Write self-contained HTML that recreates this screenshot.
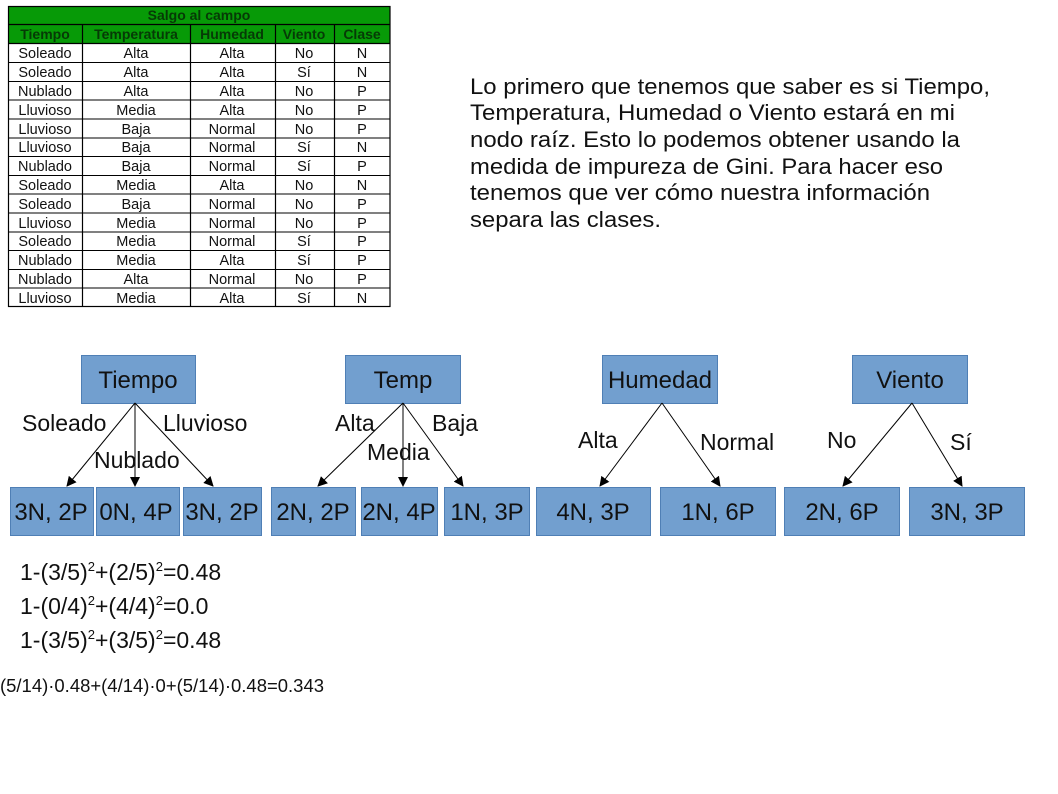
<!DOCTYPE html>
<html><head><meta charset="utf-8"><style>
html,body{margin:0;padding:0;background:#fff;width:1058px;height:794px;overflow:hidden}
svg{display:block;font-family:"Liberation Sans",sans-serif}
</style></head><body>
<svg width="1058" height="794" viewBox="0 0 1058 794" xmlns="http://www.w3.org/2000/svg">
<defs><marker id="a" markerWidth="10" markerHeight="10" refX="9" refY="5" orient="auto" markerUnits="userSpaceOnUse" viewBox="0 0 10 10"><path d="M0,0 L10,5 L0,10 z" fill="#000"/></marker></defs>
<rect x="8" y="6" width="382" height="37" fill="#079a07"/>
<g stroke="#000" stroke-width="1.2" fill="none">
<rect x="8.5" y="6.5" width="381.5" height="300"/>
<line x1="8" y1="24.5" x2="390" y2="24.5"/>
<line x1="8" y1="43.5" x2="390" y2="43.5"/>
<line x1="82.5" y1="25" x2="82.5" y2="306"/>
<line x1="190.5" y1="25" x2="190.5" y2="306"/>
<line x1="275.5" y1="25" x2="275.5" y2="306"/>
<line x1="334.5" y1="25" x2="334.5" y2="306"/>
</g>
<g stroke="#000" stroke-width="1">
<line x1="8" y1="62.5" x2="390" y2="62.5"/><line x1="8" y1="81.5" x2="390" y2="81.5"/><line x1="8" y1="100" x2="390" y2="100"/><line x1="8" y1="119" x2="390" y2="119"/><line x1="8" y1="138" x2="390" y2="138"/><line x1="8" y1="156.5" x2="390" y2="156.5"/><line x1="8" y1="175.5" x2="390" y2="175.5"/><line x1="8" y1="194" x2="390" y2="194"/><line x1="8" y1="213" x2="390" y2="213"/><line x1="8" y1="232" x2="390" y2="232"/><line x1="8" y1="250.5" x2="390" y2="250.5"/><line x1="8" y1="269.5" x2="390" y2="269.5"/><line x1="8" y1="288" x2="390" y2="288"/>
</g>
<g font-size="14" text-anchor="middle" font-weight="bold" fill="#063a06">
<text x="199" y="20">Salgo al campo</text>
<text x="45" y="39">Tiempo</text><text x="136" y="39">Temperatura</text><text x="232" y="39">Humedad</text><text x="304" y="39">Viento</text><text x="362" y="39">Clase</text>
</g>
<g font-size="14.5" text-anchor="middle" fill="#111">
<text y="58"><tspan x="45">Soleado</tspan><tspan x="136">Alta</tspan><tspan x="232">Alta</tspan><tspan x="304">No</tspan><tspan x="362">N</tspan></text>
<text y="77"><tspan x="45">Soleado</tspan><tspan x="136">Alta</tspan><tspan x="232">Alta</tspan><tspan x="304">Sí</tspan><tspan x="362">N</tspan></text>
<text y="96"><tspan x="45">Nublado</tspan><tspan x="136">Alta</tspan><tspan x="232">Alta</tspan><tspan x="304">No</tspan><tspan x="362">P</tspan></text>
<text y="115"><tspan x="45">Lluvioso</tspan><tspan x="136">Media</tspan><tspan x="232">Alta</tspan><tspan x="304">No</tspan><tspan x="362">P</tspan></text>
<text y="134"><tspan x="45">Lluvioso</tspan><tspan x="136">Baja</tspan><tspan x="232">Normal</tspan><tspan x="304">No</tspan><tspan x="362">P</tspan></text>
<text y="152"><tspan x="45">Lluvioso</tspan><tspan x="136">Baja</tspan><tspan x="232">Normal</tspan><tspan x="304">Sí</tspan><tspan x="362">N</tspan></text>
<text y="171"><tspan x="45">Nublado</tspan><tspan x="136">Baja</tspan><tspan x="232">Normal</tspan><tspan x="304">Sí</tspan><tspan x="362">P</tspan></text>
<text y="190"><tspan x="45">Soleado</tspan><tspan x="136">Media</tspan><tspan x="232">Alta</tspan><tspan x="304">No</tspan><tspan x="362">N</tspan></text>
<text y="209"><tspan x="45">Soleado</tspan><tspan x="136">Baja</tspan><tspan x="232">Normal</tspan><tspan x="304">No</tspan><tspan x="362">P</tspan></text>
<text y="228"><tspan x="45">Lluvioso</tspan><tspan x="136">Media</tspan><tspan x="232">Normal</tspan><tspan x="304">No</tspan><tspan x="362">P</tspan></text>
<text y="246"><tspan x="45">Soleado</tspan><tspan x="136">Media</tspan><tspan x="232">Normal</tspan><tspan x="304">Sí</tspan><tspan x="362">P</tspan></text>
<text y="265"><tspan x="45">Nublado</tspan><tspan x="136">Media</tspan><tspan x="232">Alta</tspan><tspan x="304">Sí</tspan><tspan x="362">P</tspan></text>
<text y="284"><tspan x="45">Nublado</tspan><tspan x="136">Alta</tspan><tspan x="232">Normal</tspan><tspan x="304">No</tspan><tspan x="362">P</tspan></text>
<text y="303"><tspan x="45">Lluvioso</tspan><tspan x="136">Media</tspan><tspan x="232">Alta</tspan><tspan x="304">Sí</tspan><tspan x="362">N</tspan></text>
</g>
<g font-size="22" fill="#111" lengthAdjust="spacingAndGlyphs">
<text x="470" y="94" textLength="520" lengthAdjust="spacingAndGlyphs">Lo primero que tenemos que saber es si Tiempo,</text>
<text x="470" y="120" textLength="485" lengthAdjust="spacingAndGlyphs">Temperatura, Humedad o Viento estará en mi</text>
<text x="470" y="147" textLength="490" lengthAdjust="spacingAndGlyphs">nodo raíz. Esto lo podemos obtener usando la</text>
<text x="470" y="174" textLength="473" lengthAdjust="spacingAndGlyphs">medida de impureza de Gini. Para hacer eso</text>
<text x="470" y="200" textLength="460" lengthAdjust="spacingAndGlyphs">tenemos que ver cómo nuestra información</text>
<text x="470" y="227" textLength="191" lengthAdjust="spacingAndGlyphs">separa las clases.</text>
</g>
<g fill="#729fcf" stroke="#4f7fb5" stroke-width="1">
<rect x="81.5" y="355.5" width="114" height="48"/>
<rect x="345.5" y="355.5" width="115" height="48"/>
<rect x="602.5" y="355.5" width="115" height="48"/>
<rect x="852.5" y="355.5" width="115" height="48"/>
<rect x="10.5" y="487.5" width="83" height="48"/>
<rect x="96.5" y="487.5" width="83" height="48"/>
<rect x="183.5" y="487.5" width="78" height="48"/>
<rect x="271.5" y="487.5" width="84" height="48"/>
<rect x="361.5" y="487.5" width="76" height="48"/>
<rect x="444.5" y="487.5" width="85" height="48"/>
<rect x="536.5" y="487.5" width="114" height="48"/>
<rect x="660.5" y="487.5" width="115" height="48"/>
<rect x="784.5" y="487.5" width="115" height="48"/>
<rect x="909.5" y="487.5" width="115" height="48"/>
</g>
<g font-size="24" fill="#111" text-anchor="middle">
<text x="138" y="388">Tiempo</text><text x="403" y="388">Temp</text><text x="660" y="388">Humedad</text><text x="910" y="388">Viento</text>
<text x="51" y="520">3N, 2P</text><text x="136" y="520">0N, 4P</text><text x="222" y="520">3N, 2P</text><text x="313" y="520">2N, 2P</text><text x="399" y="520">2N, 4P</text><text x="487" y="520">1N, 3P</text><text x="593" y="520">4N, 3P</text><text x="718" y="520">1N, 6P</text><text x="842" y="520">2N, 6P</text><text x="967" y="520">3N, 3P</text>
</g>
<g stroke="#000" stroke-width="1" marker-end="url(#a)">
<line x1="135" y1="403" x2="67" y2="486"/><line x1="135" y1="403" x2="135" y2="486"/><line x1="135" y1="403" x2="213" y2="486"/>
<line x1="403" y1="403" x2="318" y2="486"/><line x1="403" y1="403" x2="403" y2="486"/><line x1="403" y1="403" x2="463" y2="486"/>
<line x1="662" y1="403" x2="600" y2="486"/><line x1="662" y1="403" x2="720" y2="486"/>
<line x1="912" y1="403" x2="843" y2="486"/><line x1="912" y1="403" x2="962" y2="486"/>
</g>
<g font-size="23" fill="#111">
<text x="22" y="431">Soleado</text><text x="163" y="431">Lluvioso</text><text x="94" y="468">Nublado</text>
<text x="335" y="431">Alta</text><text x="432" y="431">Baja</text><text x="367" y="460">Media</text>
<text x="578" y="448">Alta</text><text x="700" y="450">Normal</text>
<text x="827" y="448">No</text><text x="950" y="450">Sí</text>
</g>
<g font-size="23" fill="#111">
<text x="20" y="580">1-(3/5)<tspan font-size="13" dy="-9">2</tspan><tspan dy="9">+(2/5)</tspan><tspan font-size="13" dy="-9">2</tspan><tspan dy="9">=0.48</tspan></text>
<text x="20" y="614">1-(0/4)<tspan font-size="13" dy="-9">2</tspan><tspan dy="9">+(4/4)</tspan><tspan font-size="13" dy="-9">2</tspan><tspan dy="9">=0.0</tspan></text>
<text x="20" y="648">1-(3/5)<tspan font-size="13" dy="-9">2</tspan><tspan dy="9">+(3/5)</tspan><tspan font-size="13" dy="-9">2</tspan><tspan dy="9">=0.48</tspan></text>
</g>
<text x="0" y="692" font-size="18" fill="#111" textLength="324" lengthAdjust="spacingAndGlyphs">(5/14)·0.48+(4/14)·0+(5/14)·0.48=0.343</text>
</svg>
</body></html>
